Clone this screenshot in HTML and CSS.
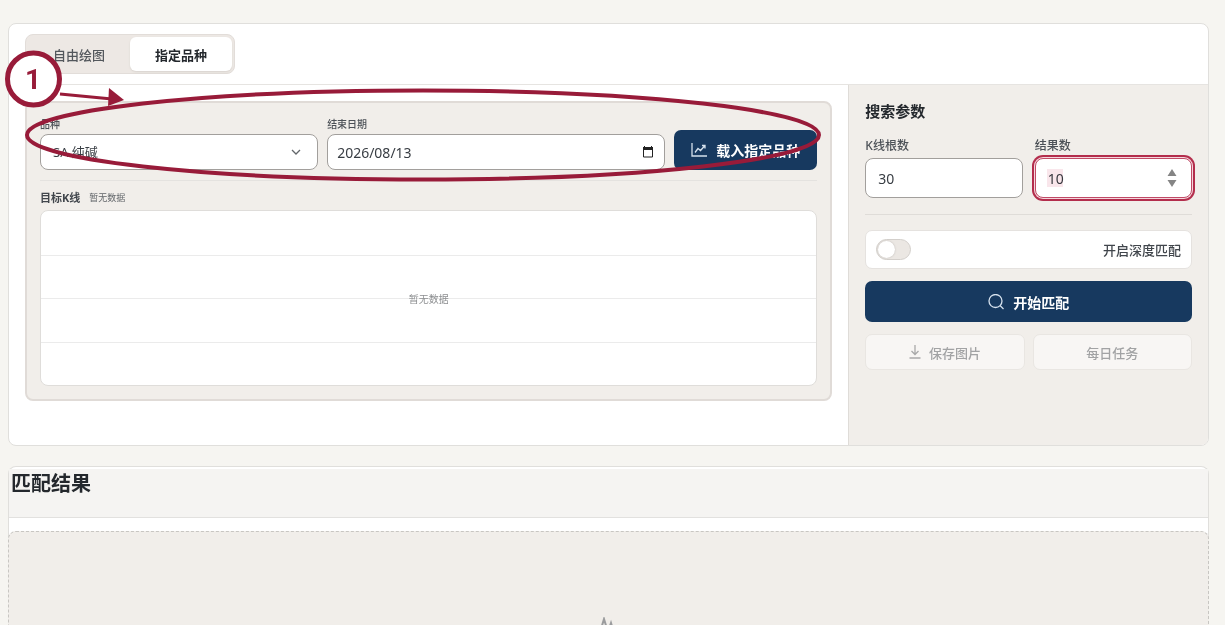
FILE: index.html
```html
<!DOCTYPE html>
<html lang="zh-CN">
<head>
<meta charset="utf-8">
<meta name="viewport" content="width=device-width, initial-scale=1">
<title>K线匹配</title>
<link rel="stylesheet" href="styles.css">
</head>
<body>
<main class="page">
  <section class="card workspace">
    <header class="toolbar">
      <div class="tabs" role="tablist">
        <button class="tab" type="button" role="tab" aria-selected="false">自由绘图</button>
        <button class="tab tab-active" type="button" role="tab" aria-selected="true">指定品种</button>
      </div>
    </header>
    <div class="columns">
      <div class="source">
        <div class="panel">
          <form class="query">
            <div class="field">
              <label class="label-small" for="symbol">品种</label>
              <div class="control">
                <select class="input input-short input-select" id="symbol"><option>SA 纯碱</option></select>
                <svg class="chevron" viewBox="0 0 10 10" aria-hidden="true"><path d="M1 3l4 4 4-4"/></svg>
              </div>
            </div>
            <div class="field">
              <label class="label-small" for="end-date">结束日期</label>
              <div class="control">
                <input class="input input-short input-date" id="end-date" type="text" value="2026/08/13">
                <svg class="calendar" viewBox="0 0 12 12" aria-hidden="true"><path d="M1.500 2h9v9h-9z"/><path class="calendar-top" d="M1 1h1V0h1v1h6V0h1v1h1v3H1z"/></svg>
              </div>
            </div>
            <button class="button button-primary button-load" type="button">
              <svg class="icon" viewBox="0 0 16 16" aria-hidden="true"><path d="M1 1v13h15M4 10.500l3-4 2.500 2L14 3.500M11 3.500h3v3"/></svg>
              <span>载入指定品种</span>
            </button>
          </form>
          <div class="chart-head">
            <h3 class="chart-title">目标K线</h3>
            <span class="chart-note">暂无数据</span>
          </div>
          <div class="chart">
            <div class="chart-row"></div>
            <div class="chart-row"></div>
            <div class="chart-row"></div>
            <div class="chart-row"></div>
            <span class="chart-empty">暂无数据</span>
          </div>
        </div>
      </div>
      <aside class="params">
        <h2 class="params-title">搜索参数</h2>
        <div class="pair pair-fields">
          <div class="field">
            <label class="label" for="bars">K线根数</label>
            <input class="input" id="bars" type="text" inputmode="numeric" value="30">
          </div>
          <div class="field">
            <label class="label" for="count">结果数</label>
            <div class="control">
              <input class="input input-focus" id="count" type="text" inputmode="numeric" value="10">
              <span class="selected-value" aria-hidden="true"></span>
              <svg class="spinner" viewBox="0 0 10 20" aria-hidden="true"><path d="M5 1l4.500 7h-9zM5 19l4.500-7h-9z"/></svg>
            </div>
          </div>
        </div>
        <div class="switch-row">
          <input class="switch" id="deep" type="checkbox" role="switch">
          <label class="switch-label" for="deep">开启深度匹配</label>
        </div>
        <button class="button button-primary button-start" type="button">
          <svg class="icon" viewBox="0 0 16 16" aria-hidden="true"><circle cx="7.500" cy="7" r="6.500"/><path d="M12 11.500l3.500 3.500"/></svg>
          <span>开始匹配</span>
        </button>
        <div class="pair pair-buttons">
          <button class="button button-muted" type="button" disabled>
            <svg class="icon icon-small" viewBox="0 0 12 14" aria-hidden="true"><path d="M6 0v9M2.500 6L6 9.500 9.500 6M.5 13h11"/></svg>
            <span>保存图片</span>
          </button>
          <button class="button button-muted" type="button" disabled>每日任务</button>
        </div>
      </aside>
    </div>
  </section>

  <section class="card results">
    <header class="results-head"><h2 class="results-title">匹配结果</h2></header>
    <div class="results-empty">
      <svg class="results-icon" viewBox="0 0 24 24" aria-hidden="true"><path d="M1 22L7 2l4 13 3-9 3 10 6-3"/></svg>
    </div>
  </section>

  <svg class="annotation" width="830" height="190" aria-hidden="true">
    <ellipse cx="423" cy="135" rx="396" ry="44.500"/>
    <path d="M60 94l52 5"/>
    <path class="annotation-head" d="M109 88l15 12-16 6z"/>
    <circle cx="33.500" cy="79" r="26"/>
    <text x="33" y="89">1</text>
  </svg>
</main>
</body>
</html>
```
FILE: styles.css
```css
* {
  box-sizing: border-box;
}

body {
  margin: 0;
  background: #f6f5f1;
  color: #24282d;
  font-family: "Noto Sans", "Noto Sans CJK SC", sans-serif;
  font-size: 13px;
}

h2,
h3 {
  margin: 0;
}

button,
input,
select {
  font: inherit;
}

.page {
  position: relative;
  display: flex;
  flex-direction: column;
  gap: 20px;
  height: 100vh;
  padding: 23px 16px 0 8px;
  overflow: hidden;
}

.card {
  background: #fff;
  border: 1px solid #e0dfdc;
  border-radius: 8px;
}

.workspace {
  flex: none;
  overflow: hidden;
}

.toolbar {
  display: flex;
  padding: 10px 16px;
  border-bottom: 1px solid #e6e4e1;
}

.tabs {
  display: flex;
  padding: 2px;
  background: #ede8e4;
  border: 1px solid #e2ddd9;
  border-radius: 8px;
}

.tab {
  width: 102px;
  height: 34px;
  padding: 0;
  border: 0;
  border-radius: 6px;
  background: transparent;
  color: #53575c;
  font-weight: 500;
}

.tab-active {
  background: #fff;
  color: #24282d;
  font-weight: 700;
  box-shadow: 0 1px 2px #d8d3ce;
}

.columns {
  display: grid;
  grid-template-columns: 7fr 3fr;
  min-height: 360px;
}

.source {
  padding: 16px;
}

.panel {
  padding: 14px 13px 13px;
  background: #f1eeea;
  border: 2px solid #e0dbd7;
  border-radius: 8px;
}

.query {
  display: grid;
  grid-template-columns: 278fr 338fr auto;
  align-items: end;
  gap: 9px;
  padding-bottom: 10px;
  border-bottom: 1px solid #e4e2df;
}

.field {
  display: flex;
  flex-direction: column;
  min-width: 0;
}

.label-small {
  margin-bottom: 2px;
  color: #4c5157;
  font-size: 10px;
  font-weight: 500;
  line-height: 15px;
}

.label {
  margin-bottom: 3px;
  color: #4c5157;
  font-size: 12px;
  font-weight: 500;
  line-height: 18px;
}

.control {
  position: relative;
}

.input {
  display: block;
  width: 100%;
  height: 40px;
  padding: 0 12px;
  border: 1px solid #a29f9c;
  border-radius: 8px;
  outline: 0;
  background: #fff;
  color: #383d43;
  font-size: 14px;
  appearance: none;
}

.input-short {
  height: 36px;
}

.input-select {
  font-size: 13px;
}

.input-date {
  padding: 0 9px;
}

.input-focus {
  border-color: #c04a66;
  box-shadow: 0 0 0 1px #f5d5dc, 0 0 0 3px #b32d4c;
}

.selected-value {
  position: absolute;
  top: 11px;
  left: 12px;
  width: 16px;
  height: 18px;
  background: #f9e6eb;
  mix-blend-mode: multiply;
}

.chevron,
.calendar,
.spinner {
  position: absolute;
  top: 0;
  bottom: 0;
  margin: auto 0;
  pointer-events: none;
}

.chevron {
  right: 17px;
  width: 10px;
  height: 10px;
  fill: none;
  stroke: #62666a;
  stroke-width: 1.3;
}

.calendar {
  right: 11px;
  width: 12px;
  height: 12px;
  fill: none;
  stroke: #222;
}

.calendar-top {
  fill: #222;
  stroke: none;
}

.spinner {
  right: 15px;
  width: 10px;
  height: 20px;
  fill: #858585;
}

.button {
  display: flex;
  align-items: center;
  justify-content: center;
  border: 1px solid transparent;
  border-radius: 7px;
}

.button-primary {
  gap: 9px;
  background: #17395f;
  color: #fff;
  font-size: 14px;
  font-weight: 700;
}

.button-load {
  height: 40px;
  padding: 0 16px;
}

.button-start {
  width: 100%;
  height: 41px;
  margin-top: 12px;
}

.button-muted {
  gap: 8px;
  height: 36px;
  padding: 0 12px;
  background: #f8f6f4;
  border-color: #e9e6e2;
  color: #a2a3a4;
  font-weight: 500;
}

.icon {
  width: 16px;
  height: 16px;
  fill: none;
  stroke: #d5e1ed;
  stroke-width: 1.3;
}

.icon-small {
  width: 12px;
  height: 14px;
  stroke: #a9a9a9;
}

.chart-head {
  display: flex;
  align-items: center;
  gap: 9px;
  height: 29px;
  padding-top: 4px;
}

.chart-title {
  color: #41464c;
  font-size: 11px;
  line-height: 16px;
}

.chart-note {
  color: #62666a;
  font-size: 9px;
  line-height: 16px;
}

.chart {
  position: relative;
  display: grid;
  grid-template-rows: repeat(4, 1fr);
  height: 176px;
  background: #fff;
  border: 1px solid #dfddda;
  border-radius: 8px;
}

.chart-row + .chart-row {
  border-top: 1px solid #ebebeb;
}

.chart-empty {
  position: absolute;
  inset: 0;
  display: grid;
  place-items: center;
  color: #8c8e90;
  font-size: 10px;
}

.params {
  padding: 16px;
  background: #f1eeea;
  border-left: 1px solid #dfdcd8;
}

.params-title {
  font-size: 15px;
  line-height: 20px;
}

.pair {
  display: grid;
  grid-template-columns: 1fr 1fr;
}

.pair-fields {
  gap: 12px;
  padding: 16px 0;
  border-bottom: 1px solid #dfdcd8;
}

.pair-buttons {
  gap: 8px;
  margin-top: 12px;
}

.switch-row {
  display: flex;
  align-items: center;
  justify-content: space-between;
  height: 39px;
  margin-top: 15px;
  padding: 0 10px;
  background: #fff;
  border: 1px solid #e5e2df;
  border-radius: 7px;
}

.switch {
  display: flex;
  width: 35px;
  height: 21px;
  margin: 0;
  padding: 1px;
  appearance: none;
  background: #ebe7e3;
  border: 1px solid #d3cfcb;
  border-radius: 11px;
}

.switch::before {
  width: 17px;
  height: 17px;
  background: #fff;
  border-radius: 50%;
  box-shadow: 0 0 2px #bbb7b3;
  content: "";
}

.switch:checked {
  justify-content: flex-end;
}

.switch-label {
  color: #41464c;
  font-weight: 500;
}

.results {
  flex: 1;
  display: flex;
  flex-direction: column;
  padding-top: 2px;
  border-bottom: 0;
  border-radius: 8px 8px 0 0;
}

.results-head {
  height: 49px;
  padding-left: 2px;
  background: #f5f4f2;
  border-bottom: 1px solid #e2e1df;
}

.results-title {
  font-size: 20px;
  line-height: 30px;
}

.results-empty {
  flex: 1;
  display: flex;
  justify-content: center;
  margin: 13px -1px 0;
  padding-top: 85px;
  background: #f1eeea;
  border: 1px dashed #c8c6c2;
  border-bottom: 0;
  border-radius: 8px 8px 0 0;
}

.results-icon {
  flex: none;
  width: 24px;
  height: 24px;
  fill: none;
  stroke: #9b9c9e;
  stroke-width: 2;
}

.annotation {
  position: absolute;
  top: 0;
  left: 0;
  fill: none;
  stroke: #981b39;
  stroke-width: 4;
  pointer-events: none;
}

.annotation circle {
  fill: #fff;
  stroke-width: 5;
}

.annotation path {
  stroke-width: 3;
}

.annotation .annotation-head {
  fill: #981b39;
  stroke: none;
}

.annotation text {
  fill: #981b39;
  stroke: none;
  font-family: Roboto, sans-serif;
  font-size: 28px;
  font-weight: 700;
  text-anchor: middle;
}
```
